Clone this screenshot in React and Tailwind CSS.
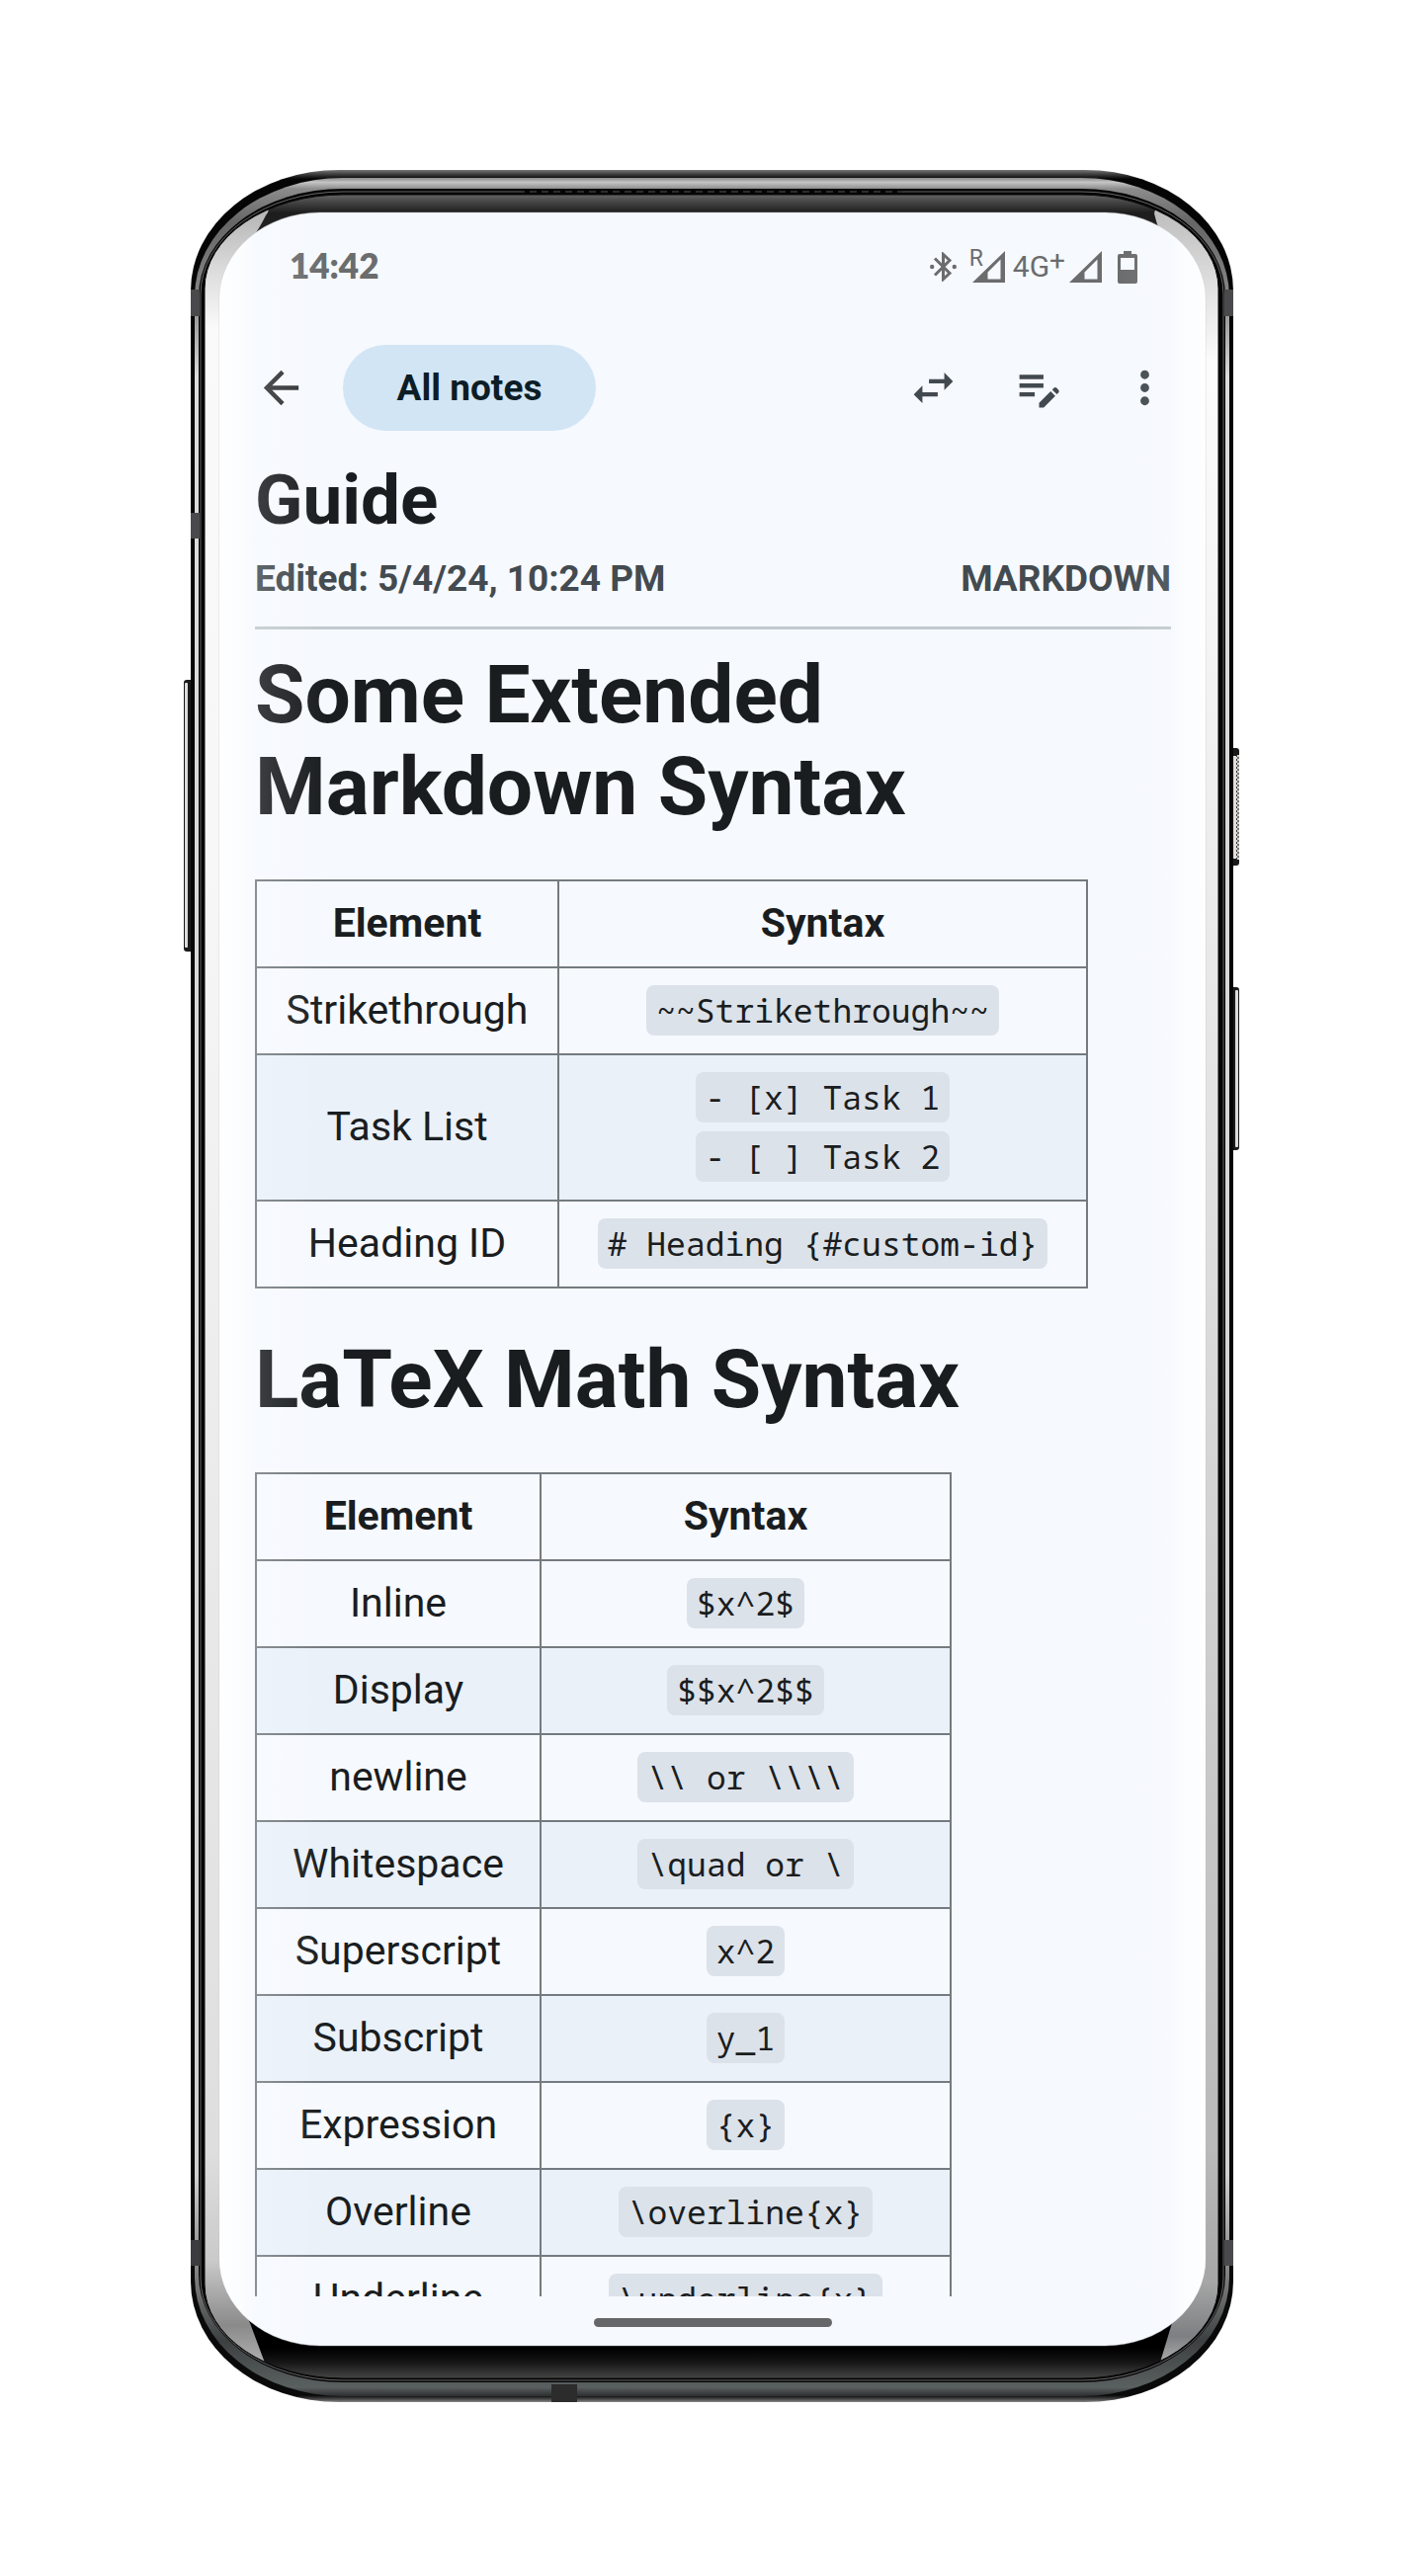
import { MdArrowBack, MdSwapHoriz, MdEditNote, MdMoreVert } from "react-icons/md";

const extended = [
  { name: "Strikethrough", code: ["~~Strikethrough~~"] },
  { name: "Task List", code: ["- [x] Task 1", "- [ ] Task 2"] },
  { name: "Heading ID", code: ["# Heading {#custom-id}"] },
];

const latex = [
  { name: "Inline", code: ["$x^2$"] },
  { name: "Display", code: ["$$x^2$$"] },
  { name: "newline", code: ["\\\\ or \\\\\\\\"] },
  { name: "Whitespace", code: ["\\quad or \\"] },
  { name: "Superscript", code: ["x^2"] },
  { name: "Subscript", code: ["y_1"] },
  { name: "Expression", code: ["{x}"] },
  { name: "Overline", code: ["\\overline{x}"] },
  { name: "Underline", code: ["\\underline{x}"] },
];

// Rectangle outline with elliptical corners.
function panel(l, t, r, b, rx, ry) {
  return `M${l + rx} ${t}H${r - rx}A${rx} ${ry} 0 0 1 ${r} ${t + ry}V${b - ry}A${rx} ${ry} 0 0 1 ${r - rx} ${b}H${l + rx}A${rx} ${ry} 0 0 1 ${l} ${b - ry}V${t + ry}A${rx} ${ry} 0 0 1 ${l + rx} ${t}Z`;
}

function DeviceFrame() {
  return (
    <svg
      className="absolute inset-0 h-full w-full"
      viewBox="0 0 1068 2260"
      preserveAspectRatio="none"
      aria-hidden="true"
    >
      <defs>
        <linearGradient id="rim" x1="0" y1="0" x2="0" y2="1">
          <stop offset="0" stopColor="#777" />
          <stop offset="0.002" stopColor="#3c3c3c" />
          <stop offset="0.004" stopColor="#050505" />
          <stop offset="0.997" stopColor="#0a0a0a" />
          <stop offset="0.999" stopColor="#555" />
          <stop offset="1" stopColor="#888" />
        </linearGradient>
        <linearGradient id="band" x1="0" y1="0" x2="0" y2="1">
          <stop offset="0" stopColor="#8a8a8a" />
          <stop offset="0.002" stopColor="#c4c4c4" />
          <stop offset="0.005" stopColor="#8c8c8c" />
          <stop offset="0.02" stopColor="#666" />
          <stop offset="0.055" stopColor="#888" />
          <stop offset="0.09" stopColor="#dcdcdc" />
          <stop offset="0.9" stopColor="#d0d0d0" />
          <stop offset="0.95" stopColor="#777" />
          <stop offset="0.975" stopColor="#3c4041" />
          <stop offset="0.996" stopColor="#5a5f60" />
          <stop offset="1" stopColor="#2c2e2f" />
        </linearGradient>
        <linearGradient id="bezel" gradientUnits="userSpaceOnUse" x1="0" y1="26" x2="0" y2="2236">
          <stop offset="0" stopColor="#606060" />
          <stop offset="0.003" stopColor="#444" />
          <stop offset="0.008" stopColor="#1c1c1c" />
          <stop offset="0.03" stopColor="#303036" />
          <stop offset="0.5" stopColor="#000" />
          <stop offset="0.986" stopColor="#000" />
          <stop offset="0.992" stopColor="#151515" />
          <stop offset="1" stopColor="#484848" />
        </linearGradient>
        <linearGradient id="glassLeft" gradientUnits="userSpaceOnUse" x1="0" y1="40" x2="0" y2="2225">
          <stop offset="0" stopColor="#b4b4b4" />
          <stop offset="0.03" stopColor="#dedede" />
          <stop offset="0.055" stopColor="#fafafa" />
          <stop offset="0.3" stopColor="#f7f7f7" />
          <stop offset="0.9" stopColor="#dedede" />
          <stop offset="0.95" stopColor="#cacaca" />
          <stop offset="0.98" stopColor="#8a8a8a" />
          <stop offset="1" stopColor="#b5b5b5" />
        </linearGradient>
        <linearGradient id="glassRight" gradientUnits="userSpaceOnUse" x1="0" y1="40" x2="0" y2="2225">
          <stop offset="0" stopColor="#bdbdbd" />
          <stop offset="0.04" stopColor="#e4e4e4" />
          <stop offset="0.07" stopColor="#fbfbfb" />
          <stop offset="0.2" stopColor="#f4f4f4" />
          <stop offset="0.5" stopColor="#dcdcdc" />
          <stop offset="0.9" stopColor="#b9b9b9" />
          <stop offset="0.96" stopColor="#a6a6a6" />
          <stop offset="0.985" stopColor="#7d8082" />
          <stop offset="1" stopColor="#b5b5b5" />
        </linearGradient>
        <pattern id="grille" width="12" height="6" patternUnits="userSpaceOnUse">
          <rect width="12" height="6" fill="#050505" />
          <rect x="2" y="3" width="7" height="2" fill="#2c2c2c" />
        </pattern>
        <pattern id="knurl" width="4" height="4" patternUnits="userSpaceOnUse">
          <rect width="4" height="4" fill="#d8d6d2" />
          <rect width="2" height="2" fill="#333" />
          <rect x="2" y="2" width="2" height="2" fill="#777" />
        </pattern>
        <clipPath id="glass">
          <path d={panel(21, 25, 1047, 2235, 140, 95)} />
        </clipPath>
      </defs>

      <rect x="0" y="516" width="10" height="275" rx="3" fill="#1a1a1a" />
      <rect x="1" y="519" width="3" height="268" rx="1" fill="#dedbd8" />
      <rect x="1059" y="585" width="9" height="119" rx="3" fill="#1a1a1a" />
      <rect x="1062" y="593" width="3" height="104" fill="#e2dfdb" />
      <rect x="1065" y="592" width="3" height="106" fill="url(#knurl)" />
      <rect x="1059" y="827" width="9" height="165" rx="3" fill="#1a1a1a" />
      <rect x="1064" y="830" width="3" height="159" rx="1" fill="#dedbd8" />

      <path d={panel(7, 0, 1062, 2259, 150, 122)} fill="url(#rim)" />
      <path d={panel(11, 8, 1058, 2253, 150, 120)} fill="url(#band)" />
      <path d={panel(15, 19, 1054, 2239, 146, 109)} fill="#050505" />
      <path d={panel(17, 22, 1052, 2237, 144, 104)} fill="none" stroke="#666" strokeWidth="1" />

      <rect x="7" y="121" width="9" height="27" fill="#4a4a4c" />
      <rect x="1053" y="121" width="9" height="27" fill="#4a4a4c" />
      <rect x="7" y="347" width="9" height="26" fill="#4a4a4c" />
      <rect x="7" y="2095" width="9" height="26" fill="#3c3c3e" />
      <rect x="1053" y="2095" width="9" height="26" fill="#4a4a4c" />
      <rect x="372" y="2241" width="26" height="18" fill="#2c2c2c" />
      <path d="M337 19H733L722 25H348Z" fill="url(#grille)" />

      <path d={panel(21, 25, 1047, 2235, 140, 95)} fill="url(#bezel)" />
      <g clipPath="url(#glass)">
        <path d="M0 30H80Q90 38 83 46Q72 68 60 80L58 2160L67 2179L83 2222V2260H0Z" fill="url(#glassLeft)" />
        <path d="M1068 30H995Q984 32 982 44Q986 64 1000 80V2179L987 2222V2260H1068Z" fill="url(#glassRight)" />
      </g>
      <path d={panel(21, 25, 1047, 2235, 140, 95)} fill="none" stroke="#0a0a0a" strokeWidth="1" />
      <path d={panel(36, 43, 1034, 2202, 102, 88)} fill="#f6f9fe" stroke="#bbb" strokeOpacity="0.4" />
    </svg>
  );
}

// White sheen where the curved glass meets the display edges.
function EdgeSheen() {
  return (
    <div
      className="pointer-events-none absolute top-[43px] right-[34px] bottom-[58px] left-[36px] flex justify-between overflow-hidden rounded-[102px/88px]"
      aria-hidden="true"
    >
      <div className="w-[110px] bg-[linear-gradient(90deg,#fffffff0_0%,#ffffffa0_20%,#ffffff28_32%,#ffffff18_55%,#ffffff00_100%)]" />
      <div className="w-[90px] bg-[linear-gradient(270deg,#ffffffd0_0%,#ffffffa0_25%,#ffffff18_40%,#ffffff00_100%)]" />
    </div>
  );
}

function Signal() {
  return (
    <svg className="h-8 w-[33px]" viewBox="0 0 33 32" fill="currentColor">
      <path fillRule="evenodd" d="M0 32L33 0V32ZM15.500 21.500V28.500H28.500V8.500Z" />
    </svg>
  );
}

function StatusBar() {
  return (
    <div className="flex h-[60px] items-center justify-between pr-[103px] pl-[107px] text-[#6b6c6d]">
      <span className="pb-1 font-['Lato',sans-serif] text-[35px] leading-[56px] font-extrabold">14:42</span>
      <div className="flex items-center">
        <svg className="h-[30px] w-[27px]" viewBox="0 0 27 30" fill="none" stroke="currentColor" strokeWidth="3">
          <path d="M5 6.500L20 21.500L13.500 27.500V2.500L20 8.500L5 23.500" />
          <circle cx="2.200" cy="15" r="2.200" fill="currentColor" stroke="none" />
          <circle cx="24.800" cy="15" r="2.200" fill="currentColor" stroke="none" />
        </svg>
        <div className="relative ml-4">
          <span className="absolute -top-1 left-[-3px] font-['Roboto',sans-serif] text-[23px] leading-[23px]">R</span>
          <Signal />
        </div>
        <span className="ml-2 flex items-center font-['Roboto',sans-serif] text-[30px] leading-8">
          4G<sup className="top-[-6px] text-[28px] leading-8">+</sup>
        </span>
        <span className="ml-1 flex">
          <Signal />
        </span>
        <svg className="ml-4 h-[33px] w-5" viewBox="0 0 20 33" fill="currentColor">
          <path fillRule="evenodd" d="M6 0H14V3H18Q20 3 20 5V31Q20 33 18 33H2Q0 33 0 31V5Q0 3 2 3H6ZM3 7V19H17V7Z" />
        </svg>
      </div>
    </div>
  );
}

function IconButton({ label, icon: Icon, tone }) {
  return (
    <button type="button" aria-label={label} className={tone}>
      <Icon className="size-[53px]" />
    </button>
  );
}

function Toolbar() {
  return (
    <header className="mt-[49px] flex h-[87px] items-center justify-between">
      <div className="flex items-center gap-9">
        <IconButton label="Back" icon={MdArrowBack} tone="text-[#303234]" />
        <button
          type="button"
          className="h-[87px] w-[256px] rounded-full bg-[#d2e5f4] text-[37px] leading-[44px] font-bold text-[#0c1d26]"
        >
          All notes
        </button>
      </div>
      <div className="flex items-center gap-[54px] text-[#424a50]">
        <IconButton label="Switch view" icon={MdSwapHoriz} tone="" />
        <IconButton label="Edit note" icon={MdEditNote} tone="" />
        <IconButton label="More options" icon={MdMoreVert} tone="" />
      </div>
    </header>
  );
}

function SyntaxTable({ rows, width, first }) {
  return (
    <table className={`${width} table-fixed border-collapse text-center text-[41px] leading-[60px]`}>
      <thead>
        <tr>
          <th className={`${first} border-2 border-[#747b80] pt-3 pb-[14px] font-bold`}>Element</th>
          <th className="border-2 border-[#747b80] pt-3 pb-[14px] font-bold">Syntax</th>
        </tr>
      </thead>
      <tbody>
        {rows.map((row) => (
          <tr key={row.name} className="even:bg-[#eaf1f9]">
            <td className="border-2 border-[#747b80] pt-3 pb-[14px]">{row.name}</td>
            <td className="border-2 border-[#747b80] pt-3 pb-[14px]">
              {row.code.map((line) => (
                <div key={line} className="flex h-[60px] items-center justify-center">
                  <code className="rounded-lg bg-[#dce2ea] px-[10px] font-['Noto_Sans_Mono','DejaVu_Sans_Mono',monospace] text-[33px] leading-[51px] whitespace-pre">
                    {line}
                  </code>
                </div>
              ))}
            </td>
          </tr>
        ))}
      </tbody>
    </table>
  );
}

export default function App() {
  return (
    <main className="flex min-h-screen items-start justify-center bg-white py-[172px] font-['Roboto',sans-serif] text-[#1a1d20]">
      <div className="relative aspect-[1068/2260] w-full max-w-[1068px]">
        <DeviceFrame />
        <div className="relative flex h-full flex-col pt-[68px]">
          <StatusBar />
          <div className="flex min-h-0 flex-1 flex-col pr-[69px] pl-[72px]">
            <Toolbar />
            <article className="mt-7 min-h-0 flex-1 overflow-hidden">
              <h1 className="text-[71px] leading-[84px] font-bold">Guide</h1>
              <div className="mt-[14px] flex justify-between border-b-3 border-[#c2c9ce] pb-6 text-[37px] leading-[48px] font-bold text-[#434b50]">
                <span>Edited: 5/4/24, 10:24 PM</span>
                <span>MARKDOWN</span>
              </div>
              <h2 className="mt-5 mb-[47px] text-[82px] leading-[93px] font-bold">
                Some Extended
                <br />
                Markdown Syntax
              </h2>
              <SyntaxTable rows={extended} width="w-[843px]" first="w-[306px]" />
              <h2 className="mt-[46px] mb-[47px] text-[82px] leading-[93px] font-bold">LaTeX Math Syntax</h2>
              <SyntaxTable rows={latex} width="w-[705px]" first="w-[288px]" />
            </article>
          </div>
          <div className="flex h-[108px] justify-center pt-[22px] pr-[69px] pl-[72px]">
            <div className="h-[9px] w-[241px] rounded-full bg-[#666769]" />
          </div>
        </div>
        <EdgeSheen />
      </div>
    </main>
  );
}
